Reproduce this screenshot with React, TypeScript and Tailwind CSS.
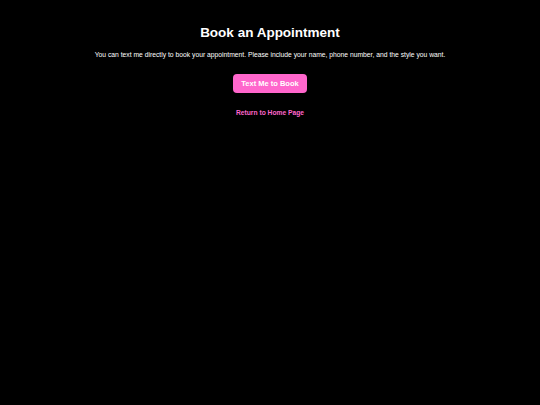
export default function App() {
  return (
    <div className="min-h-[405px] w-full bg-black font-['Liberation_Sans',Arial,sans-serif] text-white">
      <div className="flex flex-col items-center pt-[24px] text-center">
        <h1 className="text-[13.5px] font-bold leading-[18px]">Book an Appointment</h1>
        <p className="mt-[8px] text-[6.75px] leading-[9px]">
          You can text me directly to book your appointment. Please include your name, phone number, and the style you want.
        </p>
        <a
          href="#"
          className="mt-[15px] flex h-[19px] w-[74px] items-center justify-center rounded-[4px] bg-[#ff66cc] text-[7.5px] font-bold text-white"
        >
          Text Me to Book
        </a>
        <a href="#" className="mt-[15px] text-[6.7px] font-bold leading-[9px] text-[#ff66cc]">
          Return to Home Page
        </a>
      </div>
    </div>
  );
}
